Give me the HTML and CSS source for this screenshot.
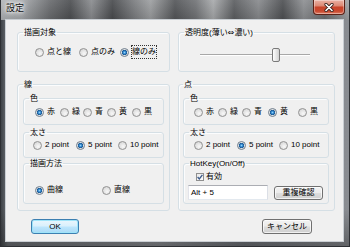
FILE: index.html
```html
<!DOCTYPE html>
<html lang="ja">
<head>
<meta charset="utf-8">
<title>設定</title>
<link rel="stylesheet" href="styles.css">
</head>
<body>
<div class="window">
  <div class="titlebar">
    <span class="title">設定</span>
    <span class="close">
      <svg width="12" height="9" viewBox="0 0 12 9"><path d="M3 1.5 L9 7.5 M9 1.5 L3 7.5" stroke="#3a2420" stroke-width="3.2" stroke-linecap="round"/><path d="M3 1.5 L9 7.5 M9 1.5 L3 7.5" stroke="#ffffff" stroke-width="1.6" stroke-linecap="round"/></svg>
    </span>
  </div>
  <div class="frame">
    <div class="client">
      <div class="grid">
        <fieldset class="grp left upper">
          <legend>描画対象</legend>
          <div class="row r-target">
            <span class="opt"><span class="radio"></span>点と線</span>
            <span class="opt"><span class="radio"></span>点のみ</span>
            <span class="opt"><span class="radio on"></span><span class="focus">線のみ</span></span>
          </div>
        </fieldset>
        <fieldset class="grp right upper alpha">
          <legend>透明度(薄い<span class="arrow">⇔</span>濃い)</legend>
          <div class="slider"><span class="thumb"></span></div>
        </fieldset>

        <fieldset class="grp left lower">
          <legend>線</legend>
          <fieldset class="sub s-color">
            <legend>色</legend>
            <div class="row r-lcolor">
              <span class="opt"><span class="radio on"></span>赤</span>
              <span class="opt"><span class="radio"></span>緑</span>
              <span class="opt"><span class="radio"></span>青</span>
              <span class="opt"><span class="radio"></span>黄</span>
              <span class="opt"><span class="radio"></span>黒</span>
            </div>
          </fieldset>
          <fieldset class="sub s-size">
            <legend>太さ</legend>
            <div class="row r-lsize">
              <span class="opt"><span class="radio"></span>2 point</span>
              <span class="opt"><span class="radio on"></span>5 point</span>
              <span class="opt"><span class="radio"></span>10 point</span>
            </div>
          </fieldset>
          <fieldset class="sub s-method">
            <legend>描画方法</legend>
            <div class="row r-method">
              <span class="opt"><span class="radio on"></span>曲線</span>
              <span class="opt"><span class="radio"></span>直線</span>
            </div>
          </fieldset>
        </fieldset>

        <fieldset class="grp right lower">
          <legend>点</legend>
          <fieldset class="sub s-color">
            <legend>色</legend>
            <div class="row r-pcolor">
              <span class="opt"><span class="radio"></span>赤</span>
              <span class="opt"><span class="radio"></span>緑</span>
              <span class="opt"><span class="radio"></span>青</span>
              <span class="opt"><span class="radio on"></span>黄</span>
              <span class="opt"><span class="radio"></span>黒</span>
            </div>
          </fieldset>
          <fieldset class="sub s-size">
            <legend>太さ</legend>
            <div class="row r-psize">
              <span class="opt"><span class="radio"></span>2 point</span>
              <span class="opt"><span class="radio on"></span>5 point</span>
              <span class="opt"><span class="radio"></span>10 point</span>
            </div>
          </fieldset>
          <fieldset class="sub s-hotkey">
            <legend>HotKey(On/Off)</legend>
            <div class="row r-check">
              <span class="opt"><span class="check"><svg width="6" height="6" viewBox="0 0 6 6"><path d="M0.6 3 L2.3 4.9 L5.4 0.8" fill="none" stroke="#3b5a8a" stroke-width="1.3"/></svg></span>有効</span>
            </div>
            <div class="keyrow">
              <span class="input">Alt + 5</span>
              <span class="btn small">重複確認</span>
            </div>
          </fieldset>
        </fieldset>
      </div>
      <div class="buttons">
        <span class="btn ok">OK</span>
        <span class="btn cancel">キャンセル</span>
      </div>
    </div>
  </div>
</div>
</body>
</html>
```
FILE: styles.css
```css
html, body {
  margin: 0;
  padding: 0;
  width: 350px;
  height: 247px;
  overflow: hidden;
  background: #4a4d51;
}

.window {
  box-sizing: border-box;
  width: 350px;
  height: 247px;
  border: 1px solid #2d2f33;
  border-top: 0;
  display: flex;
  flex-direction: column;
  font-family: "Liberation Sans", "Noto Sans CJK JP", sans-serif;
  font-size: 8px;
  color: #000;
  background:
    linear-gradient(180deg, rgba(0,0,0,0) 0, rgba(0,0,0,0) 85%, rgba(20,20,20,0.35) 100%),
    linear-gradient(90deg, #3f4348 0, #6e7277 2%, #8e9196 45%, #70747a 70%, #8a8d92 100%);
}

.titlebar {
  height: 20px;
  flex: none;
  display: flex;
  justify-content: space-between;
  align-items: flex-start;
  padding: 0 4px 0 4px;
  background:
    linear-gradient(180deg, rgba(255,255,255,0.08), rgba(0,0,0,0.12)),
    linear-gradient(90deg, #b3b6b9 0, #a7aaad 6%, #6b6d70 14%, #4e5053 20%, #8b8d90 26%, #4a4c4f 32%, #7a7c7f 38%, #9ea0a2 43%, #55575a 50%, #737578 56%, #a9abad 61%, #5d5f62 67%, #898b8e 74%, #4f5154 81%, #8f9194 87%, #6d6f72 93%, #a4a6a8 100%);
}

.title {
  font-family: "Noto Sans CJK JP", sans-serif;
  font-size: 9px;
  line-height: 12px;
  padding-top: 2px;
  padding-left: 1px;
  color: #111;
  text-shadow: 0 0 3px #fff, 0 0 5px #fff, 0 0 7px rgba(255,255,255,0.8);
}

.close {
  box-sizing: border-box;
  width: 32px;
  height: 15px;
  border: 1px solid #5b2218;
  border-top: 0;
  border-radius: 0 0 4px 4px;
  background: linear-gradient(180deg, #eab1a4 0, #dd8a76 40%, #c8442b 52%, #c9482e 80%, #e0826a 100%);
  display: flex;
  align-items: center;
  justify-content: center;
  box-shadow: inset 0 0 0 1px rgba(255,255,255,0.35);
}

.frame {
  flex: 1;
  padding: 0 6px 5px 5px;
  display: flex;
}

.client {
  box-sizing: border-box;
  width: 337px;
  height: 221px;
  padding: 7px 8px 7px 11px;
  background: #f0f0f0;
  box-shadow: 0 0 0 1px #c9ced3;
}

.grid {
  display: grid;
  grid-template-columns: 153px 157px;
  grid-template-rows: 45px 132px;
  column-gap: 8px;
  row-gap: 7px;
}

fieldset {
  margin: 0;
  min-width: 0;
  border: 1px solid #d5dfe5;
  border-radius: 3px;
  box-shadow: inset 1px 1px 0 #fbfcfd;
}

legend {
  padding: 0 1px;
  margin: 0;
  font-size: 8px;
  line-height: 11px;
  color: #000;
}

.arrow {
  font-family: "DejaVu Sans", sans-serif;
  font-size: 8px;
}

.grp.left { padding-left: 5px; padding-right: 5px; }
.grp.right { padding-left: 4px; padding-right: 5px; }

.grp.upper { padding-top: 8px; padding-bottom: 0; }
.grp.alpha { padding-top: 10px; padding-left: 5px; }

.grp.lower { padding-top: 3px; padding-bottom: 6px; }

.sub { padding-left: 5px; padding-right: 5px; }
.s-color { padding-top: 2px; padding-bottom: 6px; }
.s-size { margin-top: 2px; padding-top: 1px; padding-bottom: 6px; }
.s-method { padding-top: 15px; padding-bottom: 7px; }
.s-hotkey { padding-top: 2px; padding-bottom: 3px; }

.row {
  display: grid;
  height: 12px;
  line-height: 12px;
  align-items: center;
}

.r-target { padding-left: 12px; grid-template-columns: 44px 41px auto; }
.r-lcolor { padding-left: 6px; grid-template-columns: 25px 23px 24px 25px auto; }
.r-lsize { padding-left: 4px; grid-template-columns: 43px 42px auto; }
.r-method { padding-left: 6px; grid-template-columns: 67px auto; }
.r-pcolor { padding-left: 5px; grid-template-columns: 24px 24px 26px 30px auto; }
.r-psize { padding-left: 5px; grid-template-columns: 43px 42px auto; }
.r-check { padding-left: 7px; grid-template-columns: auto; }

.opt {
  display: flex;
  align-items: center;
  gap: 3px;
  white-space: nowrap;
}

.radio {
  box-sizing: border-box;
  flex: none;
  width: 9px;
  height: 9px;
  border-radius: 50%;
  border: 1px solid #929292;
  background: radial-gradient(circle at 60% 65%, #f8f8f8 0, #e2e2e2 55%, #cdcdcd 100%);
}

.radio.on {
  border-color: #6f7d8c;
  background: radial-gradient(circle at 50% 50%, #8fd3fa 0, #3a8fd4 1.2px, #175591 2.4px, #dfe3e6 3px, #eeeeee 100%);
}

.focus {
  outline: 1px dotted #333;
  outline-offset: 0;
}

.check {
  box-sizing: border-box;
  flex: none;
  width: 8px;
  height: 8px;
  border: 1px solid #8f8f8f;
  background: linear-gradient(135deg, #e9e9e9, #fdfdfd);
  display: flex;
  align-items: center;
  justify-content: center;
  margin-right: -1px;
}

.slider {
  margin-left: 16px;
  width: 110px;
  height: 14px;
  display: flex;
  background:
    linear-gradient(#a8a8a8, #a8a8a8) 0 6px / 100% 1px no-repeat,
    linear-gradient(#ffffff, #ffffff) 0 7px / 100% 1px no-repeat;
}

.thumb {
  box-sizing: border-box;
  margin-left: 72px;
  width: 8px;
  height: 14px;
  border: 1px solid #7a7a7a;
  border-radius: 2px;
  background: linear-gradient(90deg, #ffffff, #e4e4e4 60%, #d2d2d2);
}

.keyrow {
  margin-top: 2px;
  margin-left: -1px;
  height: 15px;
  display: flex;
  align-items: flex-end;
  gap: 6px;
}

.input {
  box-sizing: border-box;
  width: 80px;
  height: 15px;
  border: 1px solid #abadb3;
  border-left-color: #e2e3ea;
  border-right-color: #dbdfe6;
  border-bottom-color: #e3e9ef;
  background: #fff;
  line-height: 13px;
  padding-left: 2px;
}

.btn {
  box-sizing: border-box;
  display: flex;
  align-items: center;
  justify-content: center;
  border: 1px solid #707070;
  border-radius: 3px;
  background: linear-gradient(180deg, #f2f2f2 0, #ebebeb 48%, #dddddd 52%, #cfcfcf 100%);
  box-shadow: inset 0 0 0 1px rgba(255,255,255,0.7);
  line-height: 12px;
  white-space: nowrap;
}

.btn.small {
  width: 49px;
  height: 14px;
}

.buttons {
  margin-top: 8px;
  height: 15px;
  display: flex;
  justify-content: space-between;
}

.btn.ok {
  width: 48px;
  height: 15px;
  margin-left: 14px;
  border-color: #3c7fb1;
  background: linear-gradient(180deg, #eaf6fd 0, #d9f0fc 48%, #bee6fd 52%, #a7d9f5 100%);
  box-shadow: inset 0 0 0 1px #9ee4f9;
}

.btn.cancel {
  width: 50px;
  height: 15px;
  margin-right: 23px;
}
```
